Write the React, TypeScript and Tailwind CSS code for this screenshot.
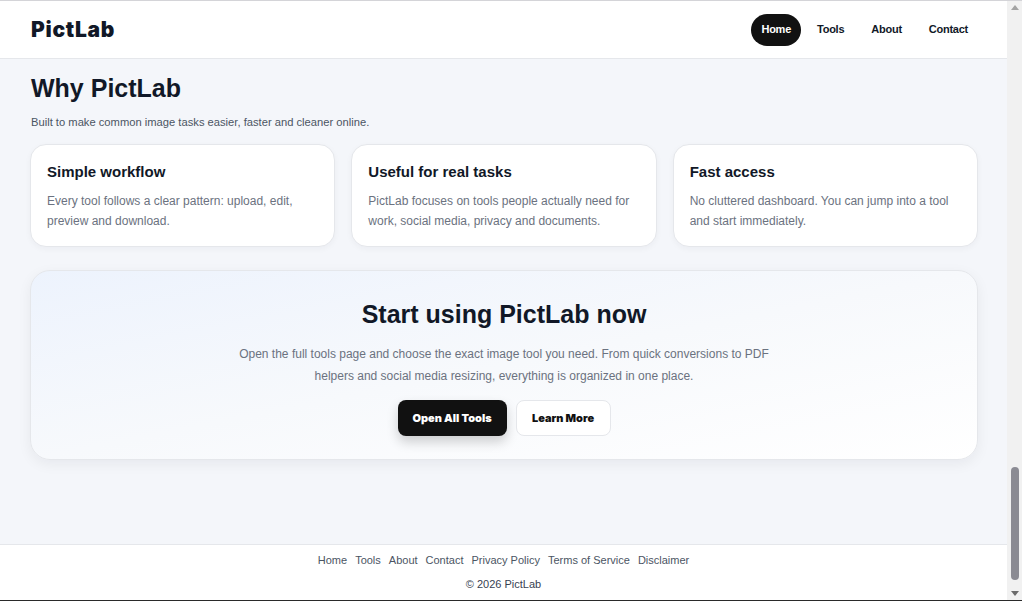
const features = [
  {
    title: "Simple workflow",
    text: "Every tool follows a clear pattern: upload, edit, preview and download.",
  },
  {
    title: "Useful for real tasks",
    text: "PictLab focuses on tools people actually need for work, social media, privacy and documents.",
  },
  {
    title: "Fast access",
    text: "No cluttered dashboard. You can jump into a tool and start immediately.",
  },
];

const footerLinks = ["Home", "Tools", "About", "Contact", "Privacy Policy", "Terms of Service", "Disclaimer"];

const App = () => {
  return (
    <div className="flex h-[601px] w-full overflow-hidden border-t border-[#d4d4d8] border-b border-b-[#2a2a2a] font-['Liberation_Sans',Arial,sans-serif] text-[#111827]">
      <div className="flex flex-1 flex-col bg-[#f4f6fa]">
        {/* Header */}
        <header className="flex h-[58px] items-center justify-between border-b border-[#e5e7eb] bg-white pl-[31px] pr-[28px]">
          <span className="font-['Inter',sans-serif] text-[21px] font-black tracking-[0.7px] text-[#111827]">PictLab</span>
          <nav className="flex items-center gap-[5px] text-[11px] font-semibold tracking-[-0.25px]">
            <a className="flex h-[32px] items-center rounded-full bg-[#111111] px-[10px] text-white">Home</a>
            <a className="px-[11px]">Tools</a>
            <a className="px-[11px]">About</a>
            <a className="px-[11px]">Contact</a>
          </nav>
        </header>

        {/* Content */}
        <main className="flex-1 pl-[30px] pr-[29px] pt-[14px]">
          <h2 className="pl-[1px] text-[25px] font-bold leading-[30px]">Why PictLab</h2>
          <p className="mt-[12px] pl-[1px] text-[11.2px] leading-[14px] text-[#4b5563]">Built to make common image tasks easier, faster and cleaner online.</p>

          <div className="mt-[15px] grid grid-cols-3 gap-[16px]">
            {features.map((f) => (
              <div key={f.title} className="h-[103px] rounded-[16px] border border-[#e5e7eb] bg-white px-[16px] pt-[17px] shadow-[0_2px_6px_rgba(15,23,42,0.04)]">
                <h3 className="text-[15px] font-semibold leading-[20px]">{f.title}</h3>
                <p className="mt-[9px] text-[12px] leading-[20px] text-[#6b7280]">{f.text}</p>
              </div>
            ))}
          </div>

          <section className="mt-[23px] flex h-[190px] flex-col items-center rounded-[20px] border border-[#e5e7eb] bg-gradient-to-br from-[#edf3fd] via-[#f7f9fc] to-white pt-[27px] shadow-[0_4px_14px_rgba(15,23,42,0.06)]">
            <h2 className="text-[25px] font-bold leading-[32px]">Start using PictLab now</h2>
            <p className="mt-[13px] w-[540px] text-center text-[12px] leading-[22px] text-[#6b7280]">
              Open the full tools page and choose the exact image tool you need. From quick conversions to PDF helpers and social media resizing, everything is organized in one place.
            </p>
            <div className="mt-[13px] flex gap-[9px]">
              <button className="h-[36px] w-[109px] rounded-[8px] bg-[#111111] font-['Inter',sans-serif] text-[11px] font-black text-white shadow-[0_6px_12px_rgba(0,0,0,0.18)]">Open All Tools</button>
              <button className="h-[36px] w-[95px] rounded-[8px] border border-[#e5e7eb] bg-white font-['Inter',sans-serif] text-[11px] font-black text-[#111111]">Learn More</button>
            </div>
          </section>
        </main>

        {/* Footer */}
        <footer className="flex h-[56px] flex-col items-center border-t border-[#e5e7eb] bg-white pt-[8px]">
          <div className="flex gap-[8px] text-[11px] leading-[14px] text-[#4b5563]">
            {footerLinks.map((l) => (
              <a key={l}>{l}</a>
            ))}
          </div>
          <p className="mt-[10px] text-[11px] leading-[14px] text-[#374151]">© 2026 PictLab</p>
        </footer>
      </div>

      {/* Scrollbar */}
      <div className="flex w-[15px] flex-col items-center bg-[#f1f1f1]">
        <div className="mt-[4px] h-0 w-0 border-x-[4px] border-b-[5px] border-x-transparent border-b-[#a3a3a3]" />
        <div className="flex-1" />
        <div className="mb-[11px] h-[113px] w-[8px] rounded-full bg-[#8b8b93]" />
        <div className="mb-[4px] h-0 w-0 border-x-[4px] border-t-[5px] border-x-transparent border-t-[#6b6b6b]" />
      </div>
    </div>
  );
};

export default App;
